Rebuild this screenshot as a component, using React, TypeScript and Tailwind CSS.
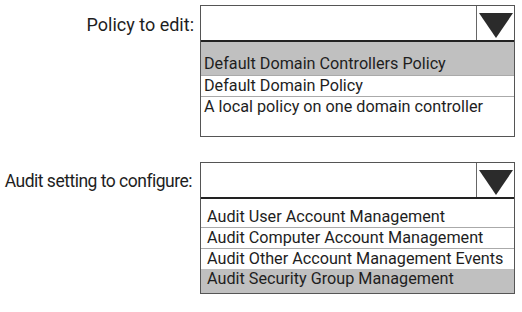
import type { FC } from 'react';

// flecha del desplegable
const Arrow: FC = () => (
	<svg width="34" height="25" viewBox="0 0 34 25" className="block">
		<polygon points="0,0 34,0 17,25" fill="#2b2b2b" />
	</svg>
);

const Dropdown: FC<{ children: React.ReactNode }> = ({ children }) => (
	<div className="w-[315px] shrink-0 border border-[#555] bg-white">
		<div className="flex h-[36px] border-b-2 border-[#222]">
			<div className="flex-1" />
			<div className="flex w-[38px] items-start justify-center border-l border-[#666] pt-[7px]">
				<Arrow />
			</div>
		</div>
		{children}
	</div>
);

const App: FC = () => {
	return (
		<div className="h-[312px] w-[522px] bg-white font-['Roboto',sans-serif] text-[#1e1e1e]">
			{/* Política */}
			<div className="flex pt-[5px]">
				<div className="flex h-[38px] w-[200px] shrink-0 items-center justify-end whitespace-nowrap pr-[6px] text-[18px]">
					Policy to edit:
				</div>
				<Dropdown>
					<div className="flex h-[33px] items-end bg-[#c0c0c0] pb-[1px] pl-[3px] text-[16.2px] leading-[20px]">
						Default Domain Controllers Policy
					</div>
					<div className="h-[21px] border-t border-[#aaa] pl-[3px] text-[16.2px] leading-[20px]">
						Default Domain Policy
					</div>
					<div className="h-[40px] border-t border-[#aaa] pl-[3px] text-[16.2px] leading-[20px]">
						A local policy on one domain controller
					</div>
				</Dropdown>
			</div>

			{/* Auditoría */}
			<div className="flex pt-[25px]">
				<div className="flex h-[38px] w-[200px] shrink-0 items-center justify-end whitespace-nowrap pr-[8px] text-[17.5px] tracking-[-0.5px]">
					Audit setting to configure:
				</div>
				<Dropdown>
					<div className="flex h-[28px] items-end pl-[6px] text-[16.2px] leading-[20px]">
						Audit User Account Management
					</div>
					<div className="h-[21px] border-t border-[#aaa] pl-[6px] text-[16.2px] leading-[20px]">
						Audit Computer Account Management
					</div>
					<div className="h-[21px] border-t border-[#aaa] pl-[6px] text-[16.2px] leading-[20px]">
						Audit Other Account Management Events
					</div>
					<div className="h-[24px] bg-[#c0c0c0] pl-[6px] text-[16.2px] leading-[20px]">
						Audit Security Group Management
					</div>
				</Dropdown>
			</div>
		</div>
	);
};

export default App;
